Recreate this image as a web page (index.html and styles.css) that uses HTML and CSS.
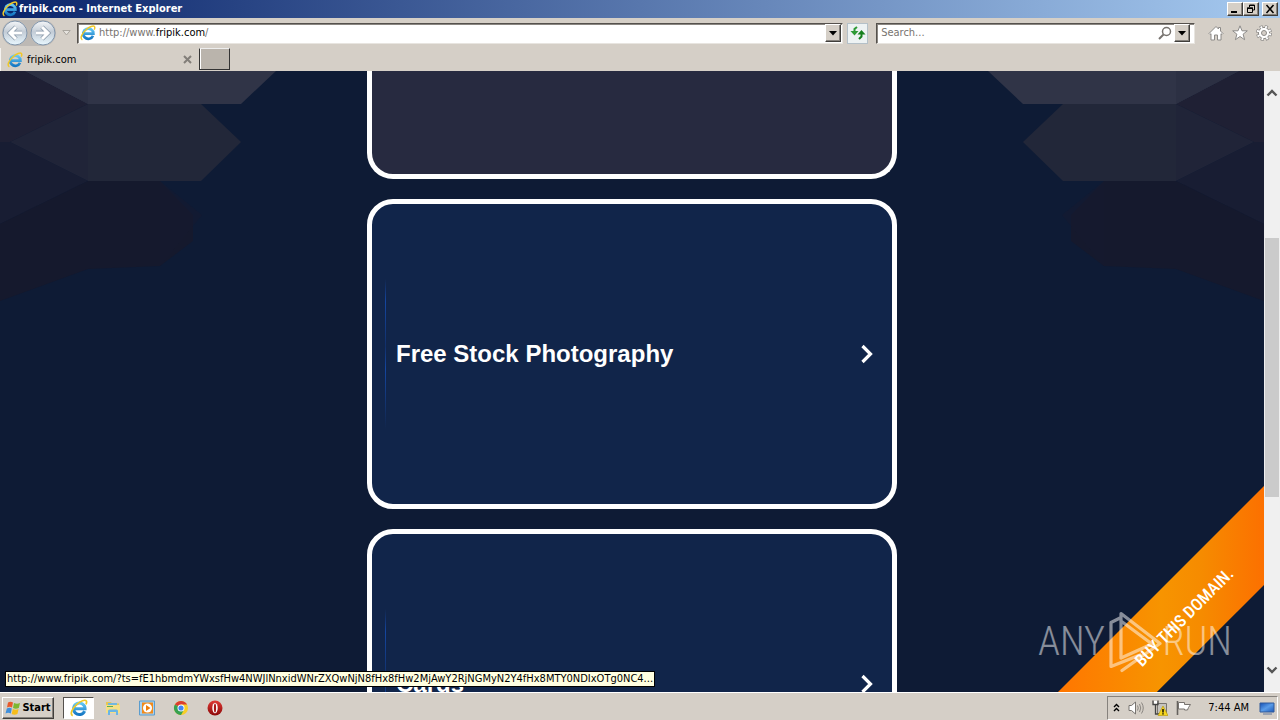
FILE: index.html
```html
<!DOCTYPE html>
<html lang="en">
<head>
<meta charset="utf-8">
<title>fripik.com - Internet Explorer</title>
<link rel="stylesheet" href="styles.css">
</head>
<body>
<svg class="defs" aria-hidden="true">
  <defs>
    <linearGradient id="ieBlue" x1="0" y1="0" x2="0" y2="1"><stop offset="0" stop-color="#63c8f5"/><stop offset="1" stop-color="#1678c4"/></linearGradient>
    <linearGradient id="orb" x1="0" y1="0" x2="0" y2="1"><stop offset="0" stop-color="#f4f6f8"/><stop offset=".45" stop-color="#c3ccd6"/><stop offset="1" stop-color="#e9f8ff"/></linearGradient>
    <linearGradient id="red" x1="0" y1="0" x2="0" y2="1"><stop offset="0" stop-color="#e03a36"/><stop offset="1" stop-color="#8c0808"/></linearGradient>
    <linearGradient id="screen" x1="0" y1="0" x2="1" y2="1"><stop offset="0" stop-color="#1450b4"/><stop offset=".5" stop-color="#5a9ce8"/><stop offset="1" stop-color="#1c58b8"/></linearGradient>
    <symbol id="ie" viewBox="0 0 16 16">
      <path d="M13 10.700A5.100 5.100 0 1 1 13.400 8.700H4.600" fill="none" stroke="url(#ieBlue)" stroke-width="2.700"/>
      <path d="M2.400 14.800C-.4 13.400 2 8.200 6.100 4.700 9.400 1.800 13.500.2 14.500 1.700c.5.8.2 2-.3 3" fill="none" stroke="#f0c828" stroke-width="1.500"/>
    </symbol>
    <symbol id="hexes" viewBox="0 0 300 260">
      <path d="M0 0h25l63 33-78 38H0z" fill="#1f2034"/>
      <path d="M25 0h251l-35 33H88z" fill="#303447"/>
      <path d="M25 0h63v33z" fill="#2c3043"/>
      <path d="M88 33h113l40 38-40 39H88z" fill="#222739"/>
      <path d="M88 33v77L10 71z" fill="#202438"/>
      <path d="M0 71h10l78 39-88 43z" fill="#181d33"/>
      <path d="M88 110h72l33 34v26l-33 25-72 3-88 32v-77z" fill="#15192d"/>
      <path d="M160 110l42 34-42 51z" fill="#151a30" opacity=".5"/>
    </symbol>
  </defs>
</svg>

<header class="titlebar">
  <svg class="i16"><use href="#ie"/></svg>
  <h1 class="title">fripik.com - Internet Explorer</h1>
  <div class="winbuttons">
    <button class="bevel win" aria-label="Minimize"><svg viewBox="0 0 12 10"><path d="M2 7h6v2H2z"/></svg></button>
    <button class="bevel win" aria-label="Restore"><svg viewBox="0 0 12 10"><path d="M4.500 3V1h5v5H8M4 1.500h6" fill="none" stroke="#000"/><path d="M2.500 4h5v4.500h-5z" fill="none" stroke="#000"/><path d="M2 3.500h6v1.500H2z"/></svg></button>
    <button class="bevel win win-close" aria-label="Close"><svg viewBox="0 0 12 10"><path d="M2.500 1l7 8M9.500 1l-7 8" stroke="#000" stroke-width="1.500"/></svg></button>
  </div>
</header>

<nav class="navbar">
  <div class="history">
    <button class="plain" aria-label="Back"><svg viewBox="0 0 26 26"><circle cx="13" cy="13" r="12" fill="url(#orb)" stroke="#8397ad"/><path d="M14 7l-6 6 6 6M8 13h12" fill="none" stroke="#8797a8" stroke-width="4.500"/><path d="M14 7l-6 6 6 6M8 13h12" fill="none" stroke="#fff" stroke-width="3"/></svg></button>
    <button class="plain" aria-label="Forward"><svg viewBox="0 0 26 26"><circle cx="13" cy="13" r="12" fill="url(#orb)" stroke="#8397ad"/><path d="M12 7l6 6-6 6M18 13H6" fill="none" stroke="#8797a8" stroke-width="4.500"/><path d="M12 7l6 6-6 6M18 13H6" fill="none" stroke="#fff" stroke-width="3"/></svg></button>
  </div>
  <button class="plain recent" aria-label="Recent pages"><svg viewBox="0 0 9 6"><path d="M.8.5h7.400L4.500 5z" fill="#e6e3de" stroke="#aaa69f"/></svg></button>
  <form class="field address">
    <svg class="i16"><use href="#ie"/></svg>
    <label class="url" for="url"><span class="muted">http://www.</span>fripik.com<span class="muted">/</span></label>
    <input id="url" type="text">
    <button type="button" class="bevel drop" aria-label="Show addresses"><svg viewBox="0 0 8 5"><path d="M0 0h8L4 4.500z"/></svg></button>
  </form>
  <button class="refresh" aria-label="Refresh"><svg viewBox="0 0 16 16"><path d="M7 2L4.500 4v3" fill="none" stroke="#2d9a35" stroke-width="2"/><path d="M.5 6H8.500L4.500 10.500z" fill="#2d9a35"/><path d="M11.500 8v3.500L9 14" fill="none" stroke="#16801e" stroke-width="2"/><path d="M7.500 9.500h8l-4-4.500z" fill="#16801e"/></svg></button>
  <form class="field search">
    <input type="text" placeholder="Search..." aria-label="Search">
    <svg class="lens" viewBox="0 0 14 14"><circle cx="8.500" cy="5.500" r="4" fill="none" stroke="#77736f" stroke-width="1.500"/><path d="M5.500 8.500L1 13" stroke="#77736f" stroke-width="2"/></svg>
    <button type="button" class="bevel drop" aria-label="Search providers"><svg viewBox="0 0 8 5"><path d="M0 0h8L4 4.500z"/></svg></button>
  </form>
  <div class="tools">
    <button class="plain" aria-label="Home"><svg viewBox="0 0 16 16"><path d="M1 8.500L8 1.500l2.500 2.500V2.500h2v3.500L15 8.500l-1 1-1-.8V15H9.500v-5h-3v5H3V8.700l-1 .8z" fill="#fff" stroke="#8c8a88"/></svg></button>
    <button class="plain" aria-label="Favorites"><svg viewBox="0 0 16 16"><path d="M8 .8l2 5h5.300l-4.200 3.400 1.500 5.500L8 11.500l-4.600 3.200 1.500-5.500L.7 5.800H6z" fill="#fff" stroke="#8c8a88"/></svg></button>
    <button class="plain" aria-label="Tools"><svg viewBox="0 0 16 16"><circle cx="8" cy="8" r="6.200" fill="none" stroke="#8c8a88" stroke-width="3.600" stroke-dasharray="2.900 1.970"/><circle cx="8" cy="8" r="5.600" fill="#fff" stroke="#8c8a88"/><circle cx="8" cy="8" r="6" fill="none" stroke="#fff" stroke-width="2.600" stroke-dasharray="1.700 3.012" stroke-dashoffset="-.5"/><circle cx="8" cy="8" r="2.500" fill="#d5cfc8" stroke="#8c8a88"/></svg></button>
  </div>
</nav>

<div class="tabs">
  <div class="tab">
    <svg class="i16"><use href="#ie"/></svg>
    <span>fripik.com</span>
    <button class="plain tabclose" aria-label="Close tab"><svg viewBox="0 0 9 9"><path d="M1 1l7 7M8 1L1 8" stroke="#827e79" stroke-width="2"/></svg></button>
  </div>
  <button class="newtab" aria-label="New tab"></button>
</div>

<div class="view">
  <main class="page">
    <svg class="hex"><use href="#hexes"/></svg>
    <svg class="hex hex-right"><use href="#hexes"/></svg>
    <div class="cards">
      <a class="card card-first" href="#" aria-label="Related link"></a>
      <a class="card" href="#"><span>Free Stock Photography</span><svg viewBox="0 0 14 20"><path d="M2.500 2l8 8-8 8" fill="none" stroke="#fff" stroke-width="3.200"/></svg></a>
      <a class="card" href="#"><span>Cards</span><svg viewBox="0 0 14 20"><path d="M2.500 2l8 8-8 8" fill="none" stroke="#fff" stroke-width="3.200"/></svg></a>
    </div>
    <a class="ribbon" href="#"><span>BUY THIS DOMAIN.</span></a>
    <div class="watermark">
      <span>ANY</span>
      <svg viewBox="0 0 56 64"><path d="M14 8L5 12.500V56.500L34 45M15 48V3.500L54 33.500 16 60.500M15 11l31 23-31 14" fill="none" stroke="#fff" stroke-width="3.200" stroke-linejoin="round" stroke-linecap="round"/></svg>
      <span>RUN</span>
    </div>
    <div class="status">http://www.fripik.com/?ts=fE1hbmdmYWxsfHw4NWJlNnxidWNrZXQwNjN8fHx8fHw2MjAwY2RjNGMyN2Y4fHx8MTY0NDIxOTg0NC4...</div>
  </main>
  <div class="scroll">
    <button class="plain" aria-label="Scroll up"><svg viewBox="0 0 12 8"><path d="M1.500 6.500L6 2l4.500 4.500" fill="none" stroke="#555" stroke-width="2.400"/></svg></button>
    <div class="track"><div class="thumb"></div></div>
    <button class="plain" aria-label="Scroll down"><svg viewBox="0 0 12 8"><path d="M1.500 1.500L6 6l4.500-4.500" fill="none" stroke="#555" stroke-width="2.400"/></svg></button>
  </div>
</div>

<footer class="taskbar">
  <button class="bevel start"><svg viewBox="0 0 16 16"><path d="M3 2.500q2.500-1.500 5 0L7 7.500q-2.500-1.300-5 0z" fill="#e8592b"/><path d="M9 3q3 1.500 6 0l-1.200 5q-3 1.300-5.800 0z" fill="#7db72f"/><path d="M1.800 8.500q2.500-1.300 5 0l-1 5q-2.500-1.500-5.300 0z" fill="#3f8fdc"/><path d="M7.800 9q3 1.300 5.800 0l-1.200 5q-3 1.500-5.700 0z" fill="#f6bd1b"/></svg>Start</button>
  <div class="apps">
    <button class="app app-on" aria-label="Internet Explorer"><svg viewBox="0 0 16 16"><use href="#ie"/></svg></button>
    <button class="app" aria-label="Explorer"><svg viewBox="0 0 16 16"><path d="M1 2h5l1 1.500h7V13H1z" fill="#e8c653"/><path d="M3 3h9v3H3z" fill="#72b8df"/><path d="M1 5h14v8H1z" fill="#f5df86"/><path d="M2 6h6v1H2z" fill="#5bae54"/><path d="M3 15v-4q0-1.500 1.500-1.500h7q1.500 0 1.500 1.500v4h-2v-3H5v3z" fill="#69b5e5"/></svg></button>
    <button class="app" aria-label="Media Player"><svg viewBox="0 0 16 16"><path d="M.5 1h15v14H.5z" fill="#a9d0ed" stroke="#5b9dce"/><path d="M3 2.500h11v11H3z" fill="#f08a1c"/><circle cx="8.500" cy="8" r="4.500" fill="#fff"/><path d="M7 5l4.500 3L7 11z" fill="#ed7d0c"/></svg></button>
    <button class="app" aria-label="Chrome"><svg viewBox="0 0 16 16"><circle cx="8" cy="8" r="7" fill="#f7ce28"/><path d="M8 8L1.900 4.500A7 7 0 0 1 14.100 4.500H8z" fill="#db3d31"/><path d="M1.900 4.500A7 7 0 0 0 8 15l3-5.300L8 8z" fill="#37a151"/><circle cx="8" cy="8" r="3.500" fill="#fff"/><circle cx="8" cy="8" r="2.600" fill="#4285f4"/></svg></button>
    <button class="app" aria-label="Opera"><svg viewBox="0 0 16 16"><circle cx="8" cy="8" r="7.500" fill="url(#red)"/><ellipse cx="8" cy="8" rx="2.700" ry="5.300" fill="#fff"/><ellipse cx="8" cy="8" rx="1.100" ry="4.500" fill="#a81717"/></svg></button>
  </div>
  <div class="tray">
    <button class="plain more" aria-label="Show hidden icons"><svg viewBox="0 0 7 9"><path d="M1 4l2.500-2.500L6 4M1 8l2.500-2.500L6 8" fill="none" stroke="#000" stroke-width="1.400"/></svg></button>
    <svg class="i16" viewBox="0 0 16 16"><path d="M1 5.500h2.500L7.500 2v12L3.500 10.500H1z" fill="#fff" stroke="#77736f"/><path d="M9.500 5.500q1.500 2.500 0 5M11.500 4q2.500 4 0 8M13.500 2.500q3.500 5.500 0 11" fill="none" stroke="#8a8681"/></svg>
    <svg class="i16" viewBox="0 0 16 16"><path d="M5.500 3.500h9v10h-9z" fill="#c6c4c0" stroke="#77736f"/><path d="M1 .5v4h5v-4M3.500 4v10h3" fill="none" stroke="#444" stroke-width="1.300"/><path d="M2 1h3v2.500H2z" fill="#fff"/><path d="M11 6l5 9.500H6z" fill="#f6d51f" stroke="#b39404" stroke-width=".6"/><path d="M10.300 9h1.400v3.500h-1.400zM10.300 13.200h1.400v1.300h-1.400z"/></svg>
    <svg class="i16" viewBox="0 0 16 16"><path d="M1.500 1v14" stroke="#66625e" stroke-width="1.600"/><path d="M2.500 2.500h6v2h6l-2 3-1 2.500h-3V9h-6z" fill="#fff" stroke="#77736f"/></svg>
    <time>7:44 AM</time>
    <svg class="i16" viewBox="0 0 16 16"><path d="M1 3h14v9H1z" fill="url(#screen)" stroke="#315b9b"/><path d="M4 14h9" stroke="#62769a"/></svg>
  </div>
</footer>
</body>
</html>
```
FILE: styles.css
```css
* { box-sizing: border-box; }
body {
  margin: 0;
  height: 100vh;
  display: flex;
  flex-direction: column;
  overflow: hidden;
  background: #d5cfc7;
  color: #000;
  font: 11px/14px "DejaVu Sans Condensed", "DejaVu Sans", sans-serif;
}
button, input { font: inherit; color: inherit; }
button { display: flex; align-items: center; justify-content: center; padding: 0; }
svg { display: block; flex: none; }
.defs { position: absolute; width: 0; height: 0; }
.i16 { width: 16px; height: 16px; }
.plain { border: 0; background: none; }
.bevel {
  background: #d5cfc7;
  border: 1px solid;
  border-color: #fff #403e3b #403e3b #fff;
  box-shadow: inset -1px -1px #86827d;
}

.titlebar {
  display: flex;
  align-items: center;
  gap: 1px;
  height: 18px;
  padding: 0 2px;
  background: linear-gradient(90deg, #0a246a, #a6caf0);
}
.title { flex: 1; margin: 0; color: #fff; font-size: 11px; line-height: 18px; }
.winbuttons { display: flex; }
.win { width: 16px; height: 14px; }
.win svg { width: 12px; height: 10px; }
.win-close { margin-left: 3px; }

.navbar { display: flex; align-items: center; height: 30px; padding: 0 8px 0 2px; }
.history { display: flex; gap: 2px; background: #bdb9b5; border-radius: 13px; }
.history svg { width: 26px; height: 26px; }
.recent { width: 21px; }
.recent svg { width: 9px; height: 6px; }
.field {
  display: flex;
  align-items: center;
  height: 21px;
  background: #fff;
  border: 1px solid;
  border-color: #55514d #e8e5e0 #e8e5e0 #55514d;
  box-shadow: inset 1px 1px #8a8681;
}
.field input { flex: 1; min-width: 0; border: 0; padding: 0; background: none; outline: 0; }
.address { flex: 759; padding: 0 1px 0 2px; gap: 3px; }
.search { flex: 308; padding: 0 4px; }
.search input::placeholder { color: #77736f; opacity: 1; }
.muted { color: #77736f; }
.drop { width: 16px; height: 18px; }
.drop svg { width: 8px; height: 5px; }
.lens { width: 14px; height: 14px; margin-right: 2px; }
.refresh { width: 21px; height: 21px; margin: 0 8px 0 4px; background: #edf2f3; border: 1px solid #b4c0c8; }
.refresh svg { width: 16px; height: 16px; }
.tools { display: flex; gap: 8px; margin-left: 13px; }
.tools svg { width: 16px; height: 16px; }

.tabs { display: flex; height: 23px; }
.tab {
  display: flex;
  align-items: center;
  gap: 4px;
  width: 199px;
  padding: 0 7px 0 6px;
  border-left: 1px solid #f5f3f0;
}
.tabclose { margin-left: auto; }
.tabclose svg { width: 9px; height: 9px; }
.newtab {
  width: 31px;
  height: 22px;
  background: #bab4ac;
  border: 1px solid;
  border-color: #eee #333 #333 #333;
  box-shadow: inset 1px 0 #fff;
}

.view { flex: 1; min-height: 0; display: flex; }
.page { position: relative; flex: 1; overflow: hidden; background: #0e1b35; }
.hex { position: absolute; top: 0; left: 0; width: 300px; height: 260px; }
.hex-right { left: auto; right: 0; transform: scaleX(-1); }
.cards { position: relative; display: flex; flex-direction: column; gap: 20px; max-width: 530px; margin: 0 auto; }
.card {
  display: flex;
  align-items: center;
  justify-content: space-between;
  flex: none;
  min-height: 310px;
  padding: 0 18px 0 24px;
  border: 5px solid #fff;
  border-radius: 26px;
  background: linear-gradient(#11254a, #1446a0 15%, #11306a 45%, #1446a0 60%, #11254a) 13px 50% / 1px 150px no-repeat #11254a;
  color: #fff;
  font: bold 24px/28px "Liberation Sans", sans-serif;
  text-decoration: none;
}
.card svg { width: 14px; height: 20px; }
.card-first { min-height: 108px; border-top: 0; border-radius: 0 0 26px 26px; background: #272a40; }
.ribbon {
  position: absolute;
  right: 0;
  bottom: 0;
  width: 206px;
  height: 206px;
  clip-path: polygon(100% 0, 100% 48%, 48% 100%, 0 100%);
  background: linear-gradient(90deg, #ff7600, #f79400 50%, #f68b00 70%, #fc7000);
  color: #fff;
  font: 500 17px/20px "Roboto Condensed", Roboto, sans-serif;
}
.ribbon span { position: absolute; left: 56px; top: 121px; width: 140px; text-align: center; transform: rotate(-45deg); }
.watermark {
  position: absolute;
  right: 32px;
  bottom: 18px;
  display: flex;
  align-items: center;
  justify-content: space-between;
  width: 194px;
  opacity: .5;
  color: #fff;
  font: 300 40px/64px "Roboto Condensed", "Liberation Sans Narrow", Roboto, sans-serif;
}
.watermark svg { width: 56px; height: 64px; }
.status {
  position: absolute;
  left: 5px;
  bottom: 5px;
  padding: 0 1px;
  border: 1px solid #000;
  background: #ffffe1;
  white-space: nowrap;
}
.scroll { display: flex; flex-direction: column; width: 16px; background: #f0f0f0; padding: 14px 0; }
.scroll button { height: 16px; }
.scroll svg { width: 12px; height: 8px; }
.track { flex: 1; display: flex; flex-direction: column; padding: 137px 1px 0; }
.thumb { height: 61%; background: #cbcbcb; }

.taskbar { display: flex; align-items: center; height: 28px; padding: 2px 2px 0; border-top: 1px solid #fff; }
.start { width: 52px; height: 22px; gap: 1px; font-weight: bold; }
.start svg { width: 16px; height: 16px; }
.apps { display: flex; gap: 3px; margin-left: 9px; }
.app { width: 31px; height: 22px; border: 0; background: none; }
.app svg { width: 16px; height: 16px; }
.app-on { background: #fff; border: 1px solid; border-color: #55514d #fff #fff #55514d; }
.app-on svg { width: 18px; height: 18px; }
.tray {
  display: flex;
  align-items: center;
  gap: 8px;
  height: 24px;
  margin-left: auto;
  padding: 0 2px 0 5px;
  border: 1px solid;
  border-color: #86827d #fff #fff #86827d;
}
.more svg { width: 7px; height: 9px; }
.tray time { margin: 0 2px 0 8px; }
```
